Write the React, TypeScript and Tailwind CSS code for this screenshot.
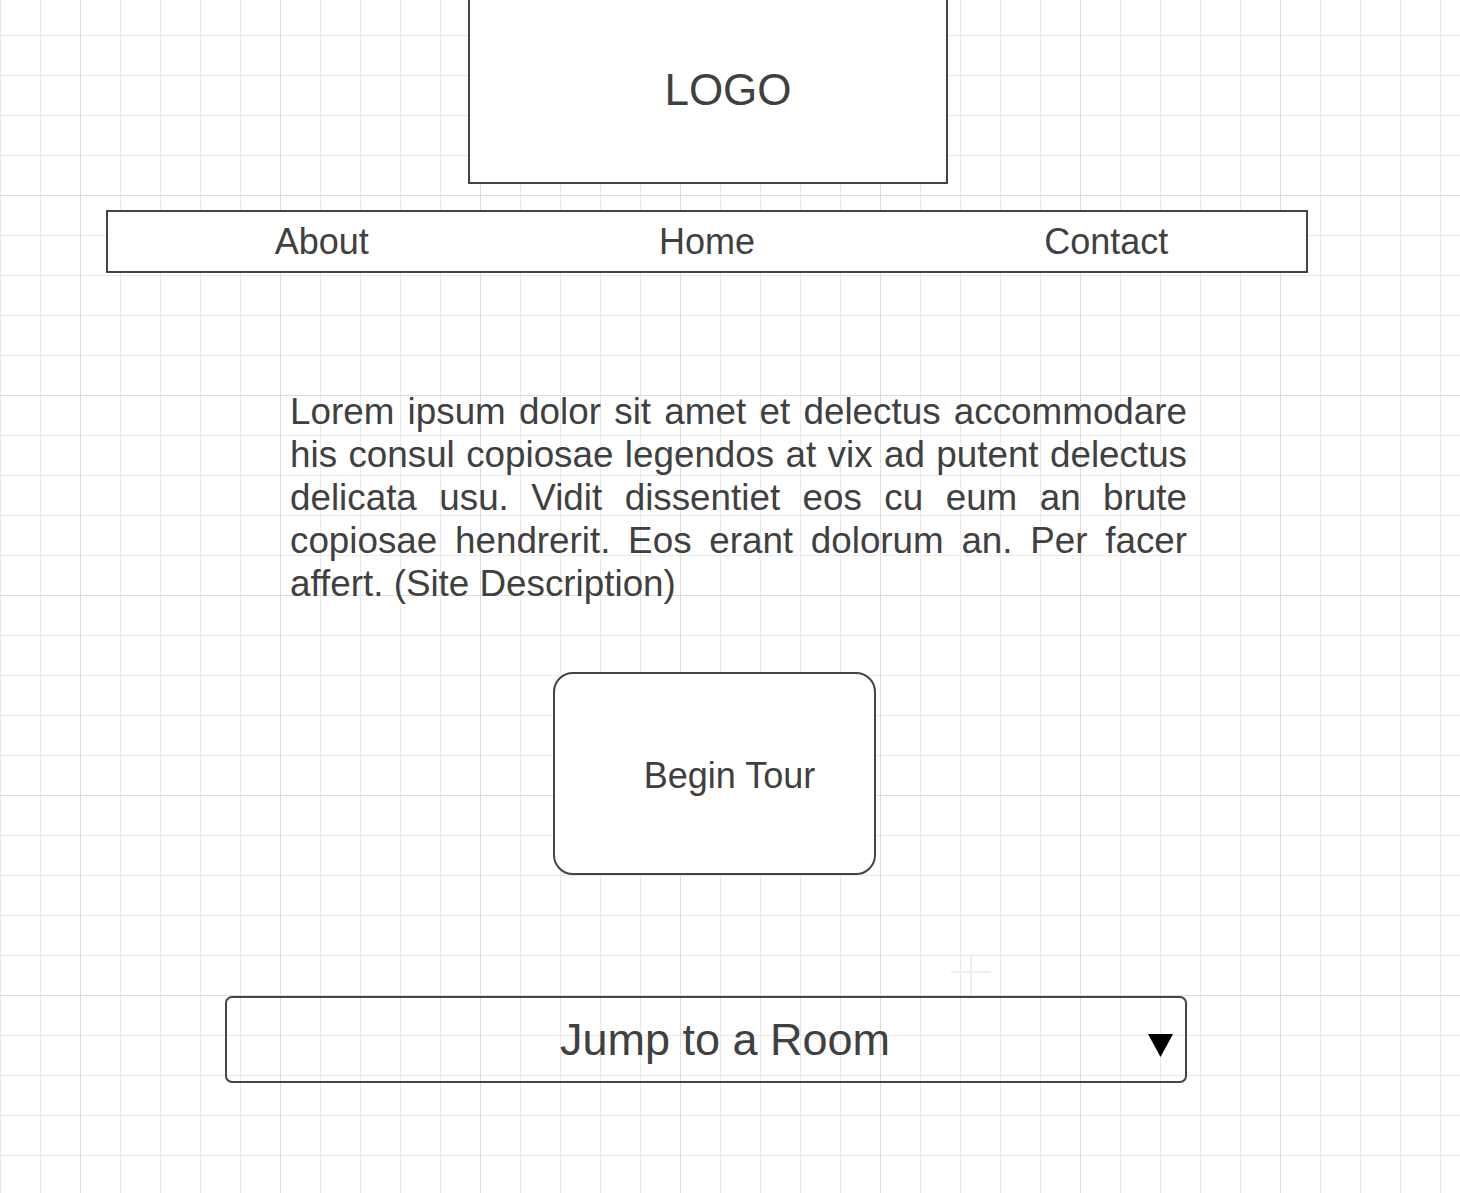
export default function App() {
  return (
    <div className="relative min-h-[1193px] w-full overflow-hidden bg-white bg-[linear-gradient(to_right,#dddddd_1px,transparent_1px),linear-gradient(to_bottom,#dddddd_1px,transparent_1px),linear-gradient(to_right,#e9e9e9_1px,transparent_1px),linear-gradient(to_bottom,#e9e9e9_1px,transparent_1px)] bg-[size:200px_200px,200px_200px,40px_40px,40px_40px] bg-[position:80px_-5px,80px_-5px,0_-5px,0_-5px] font-['Liberation_Sans',Arial,sans-serif] text-[#404040]">
      {/* Logo */}
      <div className="ml-[468px] flex h-[184px] w-[480px] items-center justify-center border-2 border-t-0 border-[#444444] bg-white pb-[3px] pl-[40px] text-[44px]">
        LOGO
      </div>

      {/* Nav */}
      <nav className="ml-[106px] mt-[26px] grid h-[63px] w-[1202px] grid-cols-3 items-center border-2 border-[#444444] bg-white text-[36px]">
        <div className="flex justify-center pl-[28px]">About</div>
        <div className="flex justify-center">Home</div>
        <div className="flex justify-center">Contact</div>
      </nav>

      {/* Site description */}
      <p className="ml-[290px] mt-[117px] w-[897px] text-justify text-[36.8px] leading-[43px]">
        Lorem ipsum dolor sit amet et delectus accommodare his consul copiosae legendos at vix ad putent delectus
        delicata usu. Vidit dissentiet eos cu eum an brute copiosae hendrerit. Eos erant dolorum an. Per facer
        affert. (Site Description)
      </p>

      {/* Begin tour */}
      <div className="ml-[553px] mt-[67px] flex h-[203px] w-[323px] items-center justify-center rounded-[20px] border-2 border-[#444444] bg-white pl-[30px] pt-[4px] text-[36px]">
        Begin Tour
      </div>

      {/* Canvas insert hint */}
      <div className="absolute left-[951px] top-[954px] h-[40px] w-[40px]">
        <div className="absolute left-[19px] top-0 h-[40px] w-[2px] bg-[#eeeeee]" />
        <div className="absolute left-0 top-[17px] h-[2px] w-[40px] bg-[#eeeeee]" />
      </div>

      {/* Jump to a room */}
      <div className="relative ml-[225px] mt-[121px] flex h-[87px] w-[962px] items-center justify-center rounded-[7px] border-2 border-[#444444] pl-[38px] text-[45px]">
        Jump to a Room
        <svg className="absolute right-[12px] top-[36px]" width="25" height="23" viewBox="0 0 25 23">
          <polygon points="0,0 25,0 12.5,23" fill="#000000" />
        </svg>
      </div>
    </div>
  )
}
